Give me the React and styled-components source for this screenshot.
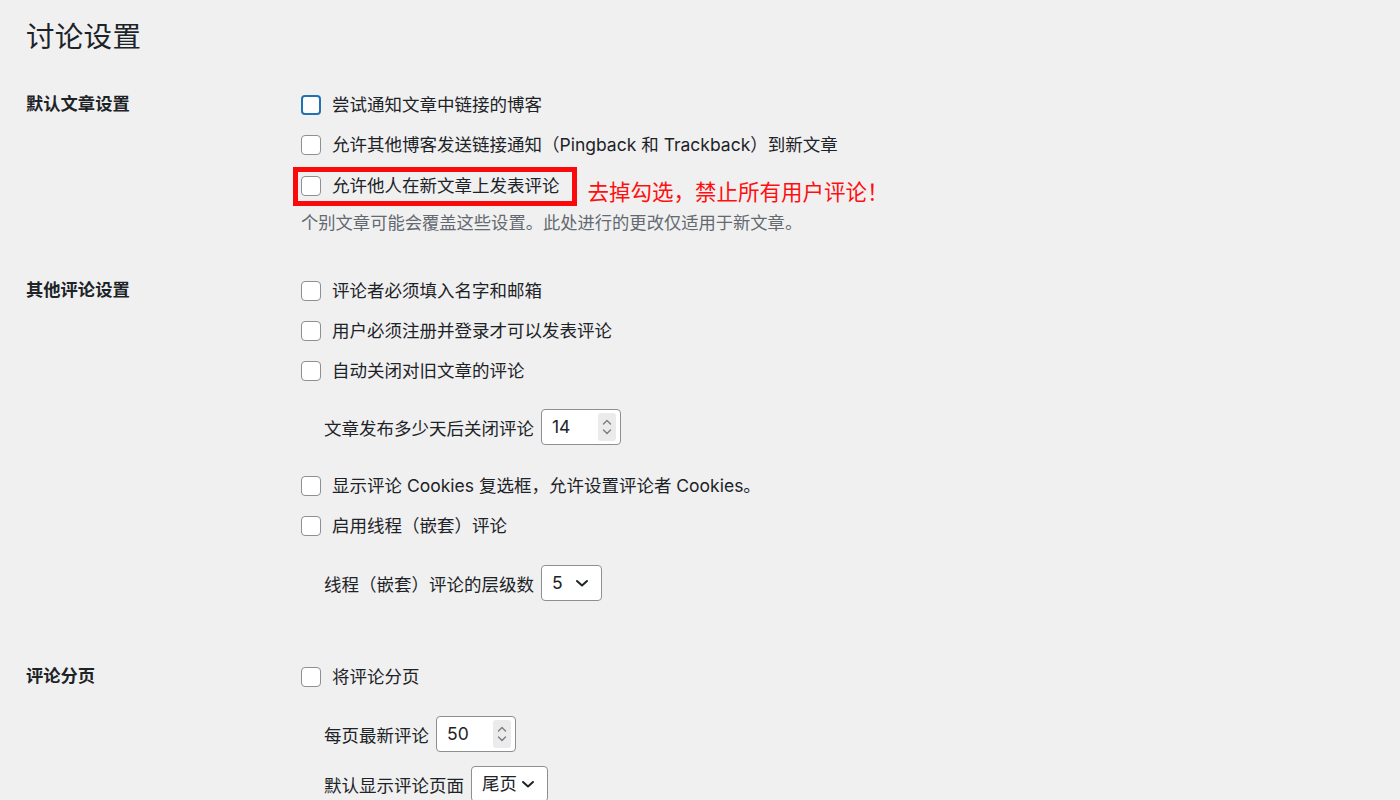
import styled, { createGlobalStyle } from "styled-components";

const GlobalStyle = createGlobalStyle`
    html, body {
        margin: 0;
        padding: 0;
        background: #f0f0f1;
    }
    body {
        font-family: Inter, "Noto Sans CJK SC", sans-serif;
        color: #1d2327;
        font-size: 17.5px;
    }
`

const Checkbox = ({ focused }) => <Box $focused={focused} />

const Spinner = () => (
    <SpinBox>
        <svg width="10" height="20" viewBox="0 0 10 20" fill="none" stroke="#7a7d82" strokeWidth="1.4" strokeLinecap="round" strokeLinejoin="round">
            <path d="M1.5 7 L5 3.5 L8.5 7" />
            <path d="M1.5 13 L5 16.5 L8.5 13" />
        </svg>
    </SpinBox>
)

const NumberField = ({ value }) => (
    <Field $width={80}>
        <span>{value}</span>
        <Spinner />
    </Field>
)

const SelectField = ({ value, width }) => (
    <Field $width={width}>
        <span>{value}</span>
        <svg width="14" height="10" viewBox="0 0 14 10" fill="none" stroke="#1d2327" strokeWidth="2" strokeLinecap="round" strokeLinejoin="round">
            <path d="M2 3 L7 7.5 L12 3" />
        </svg>
    </Field>
)

const App = () => {
    return (
        <>
            <GlobalStyle />
            <Page>
                <Title>讨论设置</Title>

                <Section $space={35}>
                    <Label>默认文章设置</Label>
                    <Fields>
                        <Row><Checkbox focused />尝试通知文章中链接的博客</Row>
                        <Row><Checkbox />允许其他博客发送链接通知（Pingback 和 Trackback）到新文章</Row>
                        <Highlight>
                            <Marked><Checkbox />允许他人在新文章上发表评论</Marked>
                            <Note>去掉勾选，禁止所有用户评论！</Note>
                        </Highlight>
                        <Description>个别文章可能会覆盖这些设置。此处进行的更改仅适用于新文章。</Description>
                    </Fields>
                </Section>

                <Section $space={56}>
                    <Label>其他评论设置</Label>
                    <Fields>
                        <Row><Checkbox />评论者必须填入名字和邮箱</Row>
                        <Row><Checkbox />用户必须注册并登录才可以发表评论</Row>
                        <Row><Checkbox />自动关闭对旧文章的评论</Row>
                        <SubRow $top={18} $bottom={21}>
                            文章发布多少天后关闭评论
                            <NumberField value="14" />
                        </SubRow>
                        <Row>
                            <Checkbox />显示评论 Cookies 复选框，允许设置评论者 Cookies。
                        </Row>
                        <Row><Checkbox />启用线程（嵌套）评论</Row>
                        <SubRow $top={19} $bottom={0}>
                            线程（嵌套）评论的层级数
                            <SelectField value="5" width={61} />
                        </SubRow>
                    </Fields>
                </Section>

                <Section $space={0}>
                    <Label>评论分页</Label>
                    <Fields>
                        <Row><Checkbox />将评论分页</Row>
                        <SubRow $top={19} $bottom={0}>
                            每页最新评论
                            <NumberField value="50" />
                        </SubRow>
                        <SubRow $top={14} $bottom={0}>
                            默认显示评论页面
                            <SelectField value="尾页" width={77} />
                        </SubRow>
                    </Fields>
                </Section>
            </Page>
        </>
    )
}

const Page = styled.div`
    padding: 17px 0 0 26px;
    width: 1374px;
    height: 783px;
    overflow: hidden;
`

const Title = styled.h1`
    margin: 0 0 28px;
    font-size: 28.5px;
    font-weight: 400;
    line-height: 40px;
    letter-spacing: 0.3px;
`

const Section = styled.div`
    display: grid;
    grid-template-columns: 275px 1fr;
    margin-bottom: ${p => p.$space}px;
`

const Label = styled.div`
    font-weight: 700;
    font-size: 17.3px;
    line-height: 40px;
    height: 40px;
    margin-top: -1px;
`

const Fields = styled.div`
    display: flex;
    flex-direction: column;
    align-items: flex-start;
`

const Row = styled.div`
    display: flex;
    align-items: center;
    height: 40px;
    gap: 11px;
    white-space: nowrap;
    line-height: 1;
    padding-bottom: 1px;
    box-sizing: border-box;
`

const Box = styled.span`
    box-sizing: border-box;
    width: 20px;
    height: 20px;
    flex: none;
    background: #fff;
    border-radius: 4px;
    border: ${p => p.$focused ? "2px solid #2271b1" : "1.5px solid #8c8f94"};
`

const Highlight = styled.div`
    display: flex;
    align-items: flex-end;
    height: 40px;
`

const Marked = styled(Row)`
    height: 39px;
    margin: 2px 0 -1px -8px;
    padding: 0 12px 1px 3px;
    border: 5px solid #fa0a0a;
`

const Note = styled.span`
    margin: 0 0 -1px 11px;
    color: #ff0f0f;
    font-size: 21.5px;
    line-height: 28px;
    font-weight: 400;
    white-space: nowrap;
`

const Description = styled.p`
    margin: 5px 0 0;
    color: #646970;
    font-size: 17.3px;
    line-height: 26px;
`

const SubRow = styled.div`
    display: flex;
    align-items: center;
    gap: 7px;
    padding-left: 23px;
    margin: ${p => p.$top}px 0 ${p => p.$bottom}px;
    white-space: nowrap;
`

const Field = styled.div`
    box-sizing: border-box;
    width: ${p => p.$width}px;
    height: 36px;
    display: flex;
    align-items: center;
    justify-content: space-between;
    padding: 0 12px 0 10px;
    background: #fff;
    border: 1px solid #8c8f94;
    border-radius: 4px;
    font-size: 17.5px;
    span {
        line-height: 1;
    }
`

const SpinBox = styled.span`
    display: flex;
    align-items: center;
    justify-content: center;
    width: 18px;
    height: 28px;
    margin-right: -8px;
    background: #ebebeb;
    border-radius: 3px;
`

export default App;
